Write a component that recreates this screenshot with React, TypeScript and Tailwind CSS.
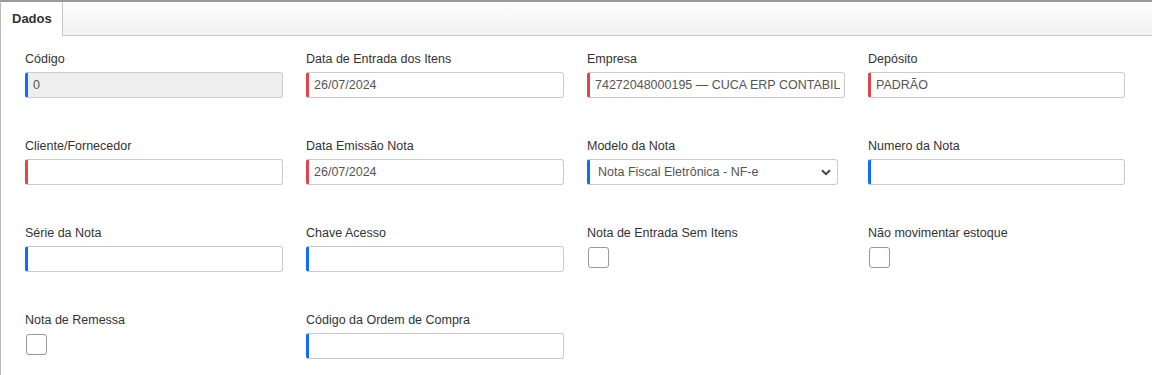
import React from 'react';

type Field = {
  label: string;
  kind: 'input' | 'select' | 'check';
  value?: string;
  accent?: 'red' | 'blue';
  disabled?: boolean;
};

const fields: Field[] = [
  { label: 'Código', kind: 'input', value: '0', accent: 'blue', disabled: true },
  { label: 'Data de Entrada dos Itens', kind: 'input', value: '26/07/2024', accent: 'red' },
  { label: 'Empresa', kind: 'input', value: '74272048000195 — CUCA ERP CONTABILIDADE', accent: 'red' },
  { label: 'Depósito', kind: 'input', value: 'PADRÃO', accent: 'red' },
  { label: 'Cliente/Fornecedor', kind: 'input', value: '', accent: 'red' },
  { label: 'Data Emissão Nota', kind: 'input', value: '26/07/2024', accent: 'red' },
  { label: 'Modelo da Nota', kind: 'select', value: 'Nota Fiscal Eletrônica - NF-e', accent: 'blue' },
  { label: 'Numero da Nota', kind: 'input', value: '', accent: 'blue' },
  { label: 'Série da Nota', kind: 'input', value: '', accent: 'blue' },
  { label: 'Chave Acesso', kind: 'input', value: '', accent: 'blue' },
  { label: 'Nota de Entrada Sem Itens', kind: 'check' },
  { label: 'Não movimentar estoque', kind: 'check' },
  { label: 'Nota de Remessa', kind: 'check' },
  { label: 'Código da Ordem de Compra', kind: 'input', value: '', accent: 'blue' },
];

const FieldBox: React.FC<{ f: Field }> = ({ f }) => {
  const accent = f.accent === 'red' ? 'border-l-[#e3434f]' : 'border-l-[#0d6efd]';
  return (
    <div className="flex flex-col">
      <label className="h-[15px] text-[12.5px] leading-[15px] text-[#333] mt-[1px] mb-[5px] whitespace-nowrap">{f.label}</label>
      {f.kind === 'input' && (
        <input
          readOnly
          value={f.value}
          className={`h-[26px] w-full rounded-[3px] border border-[#ccc] border-l-[3px] ${accent} pl-[5px] pr-1 text-[12.5px] text-[#555] outline-none ${f.disabled ? 'bg-[#eee]' : 'bg-white'}`}
        />
      )}
      {f.kind === 'select' && (
        <div className={`relative h-[26px] w-[251px] rounded-[3px] border border-[#ccc] border-l-[3px] ${accent} bg-white flex items-center pl-[8px] text-[12.5px] text-[#555]`}>
          <span className="whitespace-nowrap">{f.value}</span>
          <svg className="absolute right-[6px] top-[9px]" width="10" height="7" viewBox="0 0 10 7">
            <path d="M1 1.2 L5 5.2 L9 1.2" fill="none" stroke="#444" strokeWidth="2" />
          </svg>
        </div>
      )}
      {f.kind === 'check' && (
        <div className="mt-[1px] ml-[1px] h-[21px] w-[21px] rounded-[3px] border border-[#999] bg-white" />
      )}
    </div>
  );
};

export default function App() {
  return (
    <div className="w-[1152px] h-[375px] bg-white overflow-hidden font-['Liberation_Sans',Arial,sans-serif]">
      <div className="h-full border-t-2 border-t-[#9a9a9a] border-l border-l-[#bbb]">
        {/* Tabs */}
        <div className="flex h-[34px] border-b border-[#c8c8c8] bg-gradient-to-b from-[#fdfdfd] to-[#f1f1f1]">
          <div className="w-[62px] h-[34px] bg-white border-r border-[#c8c8c8] flex items-center pl-[11px] text-[13px] font-bold text-[#333]">
            Dados
          </div>
        </div>

        {/* Form */}
        <div className="grid grid-cols-[258px_258px_258px_257px] gap-x-[23px] gap-y-[40px] pl-[24px] pt-[15px]">
          {fields.map((f) => (
            <FieldBox key={f.label} f={f} />
          ))}
        </div>
      </div>
    </div>
  );
}
